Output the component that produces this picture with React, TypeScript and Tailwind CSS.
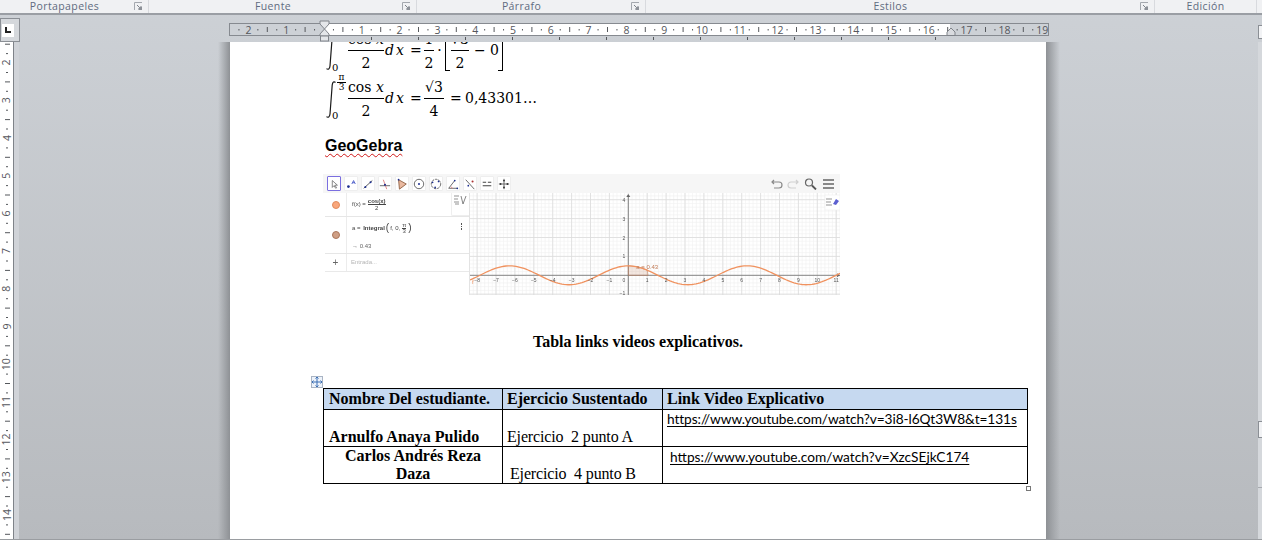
import type { ReactNode } from "react";

const ribbonGroups = [
  { label: "Portapapeles", width: "w-[149px]", launcher: true },
  { label: "Fuente", width: "w-[268px]", launcher: true },
  { label: "Párrafo", width: "w-[229px]", launcher: true },
  { label: "Estilos", width: "w-[509px]", launcher: true },
  { label: "Edición", width: "w-[102px]", launcher: false },
];

const CM = 37.8;

function Launcher() {
  return (
    <svg width="9" height="9" viewBox="0 0 9 9" className="mr-[5px] shrink-0">
      <path d="M0.5 8V0.5H8" fill="none" stroke="#a4a8ae" />
      <path d="M3 3l4 4M7 4v3H4" fill="none" stroke="#7d8289" />
      <rect x="5" y="5" width="3" height="3" fill="#8d9198" />
    </svg>
  );
}

function TopRuler() {
  const zero = 95;
  const nums = [-2, -1, 1, 2, 3, 4, 5, 6, 7, 8, 9, 10, 11, 12, 13, 14, 15, 16, 17, 18, 19];
  const marks = [];
  for (let i = -10; i <= 77; i++) marks.push(i);
  return (
    <svg width="820" height="13" viewBox="0 0 820 13" className="block">
      <rect x="0.5" y="0.5" width="819" height="12" fill="#cdd1d6" stroke="#868a90" />
      <rect x={zero} y="1" width="626" height="11" fill="#ffffff" />
      {marks.map((i) => {
        const x = zero + (i * CM) / 4;
        if (i % 4 === 0 || x < 3 || x > 816) return null;
        return i % 2 === 0 ? (
          <line key={i} x1={x} x2={x} y1="4" y2="9" stroke="#55585c" />
        ) : (
          <rect key={i} x={x - 0.5} y="6" width="1" height="1.5" fill="#55585c" />
        );
      })}
      {nums.map((n) => (
        <text key={n} x={zero + Math.abs(n) * CM * Math.sign(n)} y="10.5" textAnchor="middle" fontSize="10.5" fill="#55565c" fontFamily="Open Sans, sans-serif">
          {Math.abs(n)}
        </text>
      ))}
    </svg>
  );
}

function LeftRuler() {
  const nums = [1, 2, 3, 4, 5, 6, 7, 8, 9, 10, 11, 12, 13, 14];
  return (
    <svg width="14" height="497" viewBox="0 0 14 497" className="block shrink-0">
      <rect x="0" y="0" width="13" height="497" fill="#ffffff" />
      <rect x="13" y="0" width="1" height="497" fill="#7f8389" />
      {nums.map((n) => {
        const y = 96 + (n - 4) * 37.7;
        return (
          <g key={n}>
            <text x="7" y={y} textAnchor="middle" fontSize="10.5" fill="#55565c" fontFamily="Open Sans, sans-serif" transform={`rotate(-90 7 ${y}) translate(0 3.5)`}>
              {n}
            </text>
            <rect x="6" y={y + 9.4} width="2" height="1" fill="#55585c" />
            <rect x="5" y={y + 18.8} width="5" height="1" fill="#55585c" />
            <rect x="6" y={y + 28.2} width="2" height="1" fill="#55585c" />
          </g>
        );
      })}
    </svg>
  );
}

function Frac({ top, bottom, w = "w-[33px]" }: { top?: ReactNode; bottom: ReactNode; w?: string }) {
  return (
    <div className={`grid h-[48px] shrink-0 grid-rows-[24px_24px] whitespace-nowrap text-center ${w}`}>
      <div className="flex items-end justify-center pb-[1px] leading-[20px]">{top}</div>
      <div className="border-t border-black pt-[1px] leading-[22px]">{bottom}</div>
    </div>
  );
}

function Integral({ upper }: { upper?: ReactNode }) {
  return (
    <div className="relative h-[48px] w-[23px] shrink-0">
      <svg width="14" height="40" viewBox="0 0 14 40" className="mt-[6px]">
        <path d="M10.5 2.5C9 1 7.6 2 7.2 5L5 34c-.3 3-2 4-3.5 2.6" fill="none" stroke="#1a1a1a" strokeWidth="1.2" />
      </svg>
      <span className="absolute left-[7px] top-[36px] text-[10px] font-medium leading-[12px]">0</span>
      {upper}
    </div>
  );
}

function MathRowOne() {
  return (
    <div className="ml-[2px] -mt-[16px] flex h-[48px] items-center font-['DejaVu_Serif',serif] text-[14px] text-black">
      <Integral />
      <Frac top={<span>cos <i>x</i></span>} bottom="2" />
      <span className="ml-[4px] w-[25px] italic tracking-[2px]">dx</span>
      <span className="w-[14px]">=</span>
      <Frac top="1" bottom="2" w="w-[10px]" />
      <span className="w-[11px] text-center">·</span>
      <div className="h-[45px] w-[5px] shrink-0 self-start border-y border-l border-black" />
      <Frac top="√3" bottom="2" w="w-[18px] ml-[1px]" />
      <span className="ml-[5px] w-[16px]">−</span>
      <span className="w-[8px]">0</span>
      <div className="h-[45px] w-[5px] shrink-0 self-start border-y border-r border-black" />
    </div>
  );
}

function MathRowTwo() {
  const upper = (
    <div className="absolute left-[12px] -top-[1px] w-[9px] text-center text-[9px] font-medium leading-[9px]">
      <div className="border-b border-black">π</div>
      <div>3</div>
    </div>
  );
  return (
    <div className="ml-[2px] flex h-[48px] items-center font-['DejaVu_Serif',serif] text-[14px] text-black">
      <Integral upper={upper} />
      <Frac top={<span>cos <i>x</i></span>} bottom="2" />
      <span className="ml-[4px] w-[25px] italic tracking-[2px]">dx</span>
      <span className="w-[14px]">=</span>
      <Frac top="√3" bottom="4" w="w-[20px]" />
      <span className="ml-[6px] w-[15px]">=</span>
      <span>0,43301…</span>
    </div>
  );
}

const toolIcons: ReactNode[] = [
  <path key="0" d="M5 3v8l2-2 2 3 1-.6-2-3h3z" fill="#fff" stroke="#555" strokeWidth=".8" />,
  <g key="1"><circle cx="4" cy="10" r="1.6" fill="#1d2f8f" /><path d="M8 7l2-4 2 4M9 5.5h2" fill="none" stroke="#3f51c4" /></g>,
  <g key="2"><path d="M2 12L12 3" stroke="#444" /><circle cx="4" cy="10.5" r="1.2" fill="#1d2f8f" /><circle cx="10" cy="5" r="1.2" fill="#1d2f8f" /></g>,
  <g key="3"><path d="M1 9h12" stroke="#555" /><path d="M5 2l4 11" stroke="#d77" /><circle cx="7" cy="8" r="1.2" fill="#1d2f8f" /></g>,
  <g key="4"><path d="M3 2l9 5-8 6z" fill="#e9b9a0" stroke="#8a5a3c" /><circle cx="3" cy="2" r="1" fill="#1d2f8f" /></g>,
  <g key="5"><circle cx="7" cy="7" r="5.5" fill="none" stroke="#555" /><circle cx="7" cy="7" r="1.2" fill="#1d2f8f" /></g>,
  <g key="6"><circle cx="7" cy="7" r="5.5" fill="none" stroke="#555" strokeDasharray="3 1" /><circle cx="3" cy="5" r="1" fill="#1d2f8f" /><circle cx="10" cy="4" r="1" fill="#1d2f8f" /><circle cx="6" cy="11" r="1" fill="#1d2f8f" /></g>,
  <g key="7"><path d="M2 12L9 3M2 12h10" stroke="#555" fill="none" /><path d="M5 12a4 4 0 0 0-1-3l3 3z" fill="#e88" /><circle cx="9" cy="3" r="1" fill="#1d2f8f" /><circle cx="12" cy="12" r="1" fill="#1d2f8f" /></g>,
  <g key="8"><path d="M2 2l10 11" stroke="#555" /><circle cx="10" cy="4" r="1.2" fill="#a33" /><circle cx="5" cy="9" r="1" fill="#1d2f8f" /></g>,
  <g key="9"><path d="M2 5h4M2 9h10M8 5h4" stroke="#444" strokeWidth="1.2" /></g>,
  <g key="10"><path d="M7 1v12M1 7h12" stroke="#555" /><circle cx="7" cy="3" r="1.1" fill="#333" /><circle cx="7" cy="11" r="1.1" fill="#333" /><circle cx="3" cy="7" r="1.1" fill="#333" /><circle cx="11" cy="7" r="1.1" fill="#333" /></g>,
];

function GeoToolbar() {
  return (
    <div className="flex h-[19px] items-center justify-between bg-[#f6f6f6] pl-[4px] pr-[6px]">
      <div className="flex gap-[3px]">
        {toolIcons.map((icon, i) => (
          <div key={i} className={`flex h-[15px] w-[14px] items-center justify-center rounded-[1px] bg-white ${i === 0 ? "border border-[#7b6fe0]" : "border border-[#eeeeee]"}`}>
            <svg width="12" height="12" viewBox="0 0 14 14">{icon}</svg>
          </div>
        ))}
      </div>
      <div className="flex items-center gap-[4px]">
        <svg width="12" height="10" viewBox="0 0 12 10"><path d="M3 1L1 3l2 2M1 3h7a3 3 0 0 1 0 6H3" fill="none" stroke="#8a8a8a" strokeWidth="1.2" /></svg>
        <svg width="12" height="10" viewBox="0 0 12 10"><path d="M9 1l2 2-2 2M11 3H4a3 3 0 0 0 0 6h5" fill="none" stroke="#cfcfcf" strokeWidth="1.2" /></svg>
        <svg width="13" height="12" viewBox="0 0 13 12" className="ml-[1px]"><circle cx="5" cy="4.5" r="3.5" fill="none" stroke="#666" strokeWidth="1.2" /><path d="M8 7.5l4 4" stroke="#555" strokeWidth="1.8" /></svg>
        <svg width="11" height="10" viewBox="0 0 11 10" className="ml-[2px]"><path d="M0 1h11M0 5h11M0 9h11" stroke="#666" strokeWidth="1.3" /></svg>
      </div>
    </div>
  );
}

function AlgebraPanel() {
  return (
    <div className="w-[146px] shrink-0 border-r border-[#e3e3e3] pl-[1px] font-['Liberation_Sans',sans-serif] text-[6px] text-[#444]">
      <div className="flex h-[24px] border-b border-[#e6e6e6]">
        <div className="flex w-[22px] items-center justify-center border-r border-[#ececec]">
          <div className="size-[8px] rounded-full border border-[#e08a5c] bg-[#f9a77c]" />
        </div>
        <div className="flex flex-1 items-center gap-[2px] pl-[5px]">
          <span>f(x) =</span>
          <div className="text-center leading-[6px]">
            <div className="border-b border-[#444] font-bold">cos(x)</div>
            <div>2</div>
          </div>
        </div>
        <div className="flex w-[18px] items-start justify-center rounded-bl-[2px] border-b border-l border-[#eeeeee] pt-[2px]">
          <svg width="13" height="10" viewBox="0 0 13 10"><path d="M0 1h5M0 4h4M0 7h5M1 9h4" stroke="#666" strokeWidth=".7" /><path d="M7 1l2 8 3-8" fill="none" stroke="#666" strokeWidth=".8" /></svg>
        </div>
      </div>
      <div className="flex h-[37px] border-b border-[#e6e6e6]">
        <div className="flex w-[22px] items-center justify-center border-r border-[#ececec]">
          <div className="size-[8px] rounded-full border border-[#a9755a] bg-[#cf9f85]" />
        </div>
        <div className="flex flex-1 flex-col gap-[8px] pl-[5px] pt-[5px]">
          <div className="flex h-[12px] items-center gap-[1px] whitespace-pre">
            <span>a = </span>
            <span className="font-bold">Integral</span>
            <span className="text-[10px] font-thin leading-[10px]">(</span>
            <span>f, 0,</span>
            <div className="mx-[1px] text-center leading-[5px]">
              <div className="border-b border-[#444]">π</div>
              <div>3</div>
            </div>
            <span className="text-[10px] font-thin leading-[10px]">)</span>
          </div>
          <span className="text-[#666]">→ 0.43</span>
        </div>
        <div className="mr-[7px] mt-[6px] flex flex-col gap-[1px]">
          <div className="size-[1.5px] bg-[#555]" />
          <div className="size-[1.5px] bg-[#555]" />
          <div className="size-[1.5px] bg-[#555]" />
        </div>
      </div>
      <div className="flex h-[18px] border-b border-[#e9e9e9]">
        <div className="flex w-[22px] items-center justify-center border-r border-[#ececec] text-[10px] text-[#666]">+</div>
        <div className="flex flex-1 items-center pl-[4px] text-[#b5b5b5]">Entrada...</div>
      </div>
    </div>
  );
}

function Chart() {
  const W = 370;
  const H = 102;
  const ox = 158.3;
  const oy = 82.3;
  const u = 18.9;
  const xs: number[] = [];
  for (let i = -9; i <= 12; i++) xs.push(i);
  const ys = [-1, 1, 2, 3, 4, 5];
  const minorX: number[] = [];
  for (let v = -9; v <= 12; v += 0.2) minorX.push(ox + v * u);
  const minorY: number[] = [];
  for (let v = -1; v <= 5; v += 0.2) minorY.push(oy - v * u);

  let curve = "";
  for (let px = 0; px <= W; px += 2) {
    const y = oy - (Math.cos((px - ox) / u) / 2) * u;
    curve += `${px === 0 ? "M" : "L"}${px} ${y.toFixed(2)} `;
  }
  let area = `M${ox} ${oy} `;
  for (let v = 0; v <= Math.PI / 3; v += 0.05) {
    area += `L${(ox + v * u).toFixed(2)} ${(oy - (Math.cos(v) / 2) * u).toFixed(2)} `;
  }
  area += `L${ox + (Math.PI / 3) * u} ${oy}Z`;

  return (
    <svg width={W} height={H} viewBox={`0 0 ${W} ${H}`} className="block shrink-0" fontFamily="Liberation Sans, sans-serif">
      <rect width={W} height={H} fill="#ffffff" />
      {minorX.map((x) => <line key={x} x1={x} x2={x} y1="0" y2={H} stroke="#f0f0f0" strokeWidth=".6" />)}
      {minorY.map((y) => <line key={y} y1={y} y2={y} x1="0" x2={W} stroke="#f0f0f0" strokeWidth=".6" />)}
      {xs.map((v) => <line key={v} x1={ox + v * u} x2={ox + v * u} y1="0" y2={H} stroke="#dcdcdc" strokeWidth=".8" />)}
      {ys.map((v) => <line key={v} y1={oy - v * u} y2={oy - v * u} x1="0" x2={W} stroke="#dcdcdc" strokeWidth=".8" />)}
      <path d={`M0 ${oy}H${W}`} stroke="#777" strokeWidth=".9" />
      <path d={`M${ox} 2V${H}`} stroke="#777" strokeWidth=".9" />
      <path d={`M${ox - 2} 4L${ox} 1L${ox + 2} 4Z`} fill="#666" />
      <path d={`M${W - 3} ${oy - 2}L${W} ${oy}L${W - 3} ${oy + 2}Z`} fill="#666" />
      <path d={area} fill="#c98f6f" fillOpacity=".22" stroke="#bd7650" strokeWidth=".5" />
      <path d={curve} fill="none" stroke="#f0925f" strokeWidth="1.3" />
      {xs.filter((v) => v !== 0 && v >= -8 && v <= 11).map((v) => (
        <text key={v} x={ox + v * u} y={oy + 7} textAnchor="middle" fontSize="5" fill="#555">{v < 0 ? `−${-v}` : v}</text>
      ))}
      {[1, 2, 3, 4].map((v) => (
        <text key={v} x={ox - 3} y={oy - v * u + 2} textAnchor="end" fontSize="5" fill="#555">{v}</text>
      ))}
      <text x={ox - 3} y={oy + 7} textAnchor="end" fontSize="5" fill="#555">0</text>
      <text x={ox - 3} y={oy + u + 1} textAnchor="end" fontSize="5" fill="#555">−1</text>
      <text x={ox + 8} y={oy - 6} fontSize="6" fill="#c17b57">a = 0.43</text>
      <text x="2" y={oy + 9} fontSize="6" fill="#f0925f">f</text>
      <rect x={W - 15} y="2" width="15" height="15" fill="#ffffff" stroke="#eeeeee" strokeWidth=".6" />
      <path d={`M${W - 14} 6h6M${W - 14} 9h5M${W - 14} 12h6`} stroke="#666" strokeWidth=".7" />
      <path d={`M${W - 7} 11l3-5 3 2-3 4z`} fill="#5b5fd0" />
    </svg>
  );
}

function GeoGebra() {
  return (
    <div className="mt-[16px] h-[121px] w-[517px] blur-[0.3px]">
      <GeoToolbar />
      <div className="flex pl-[1px]">
        <AlgebraPanel />
        <Chart />
      </div>
    </div>
  );
}

const ROWS = [
  { name: "Arnulfo Anaya Pulido", ex: "Ejercicio  2 punto A", url: "https://www.youtube.com/watch?v=3i8-l6Qt3W8&t=131s", h: "h-[37px]" },
  { name: "Carlos Andrés Reza Daza", ex: "Ejercicio  4 punto B", url: "https://www.youtube.com/watch?v=XzcSEjkC174", h: "h-[37px]" },
];

function LinksTable() {
  return (
    <div className="relative mt-[36px] w-[704px]">
      <div className="absolute -left-[12px] -top-[12px] flex size-[12px] items-center justify-center border border-[#a9b4c4] bg-[#eef3fa]">
        <svg width="10" height="10" viewBox="0 0 10 10"><path d="M5 0v10M0 5h10M3.5 1.5L5 0l1.5 1.5M3.5 8.5L5 10l1.5-1.5M1.5 3.5L0 5l1.5 1.5M8.5 3.5L10 5 8.5 6.5" fill="none" stroke="#3b6fb5" /></svg>
      </div>
      <table className="w-[704px] table-fixed border-collapse font-['Liberation_Serif',serif] text-[16px] leading-[18px] text-black">
        <colgroup>
          <col className="w-[179px]" />
          <col className="w-[160px]" />
          <col className="w-[365px]" />
        </colgroup>
        <thead>
          <tr className="h-[21px] bg-[#c6d9f0] font-bold">
            <th className="border border-black pl-[5px] text-left align-middle">Nombre Del estudiante.</th>
            <th className="border border-black pl-[4px] text-left align-middle">Ejercicio Sustentado</th>
            <th className="border border-black pl-[4px] text-left align-middle">Link Video Explicativo</th>
          </tr>
        </thead>
        <tbody>
          {ROWS.map((row, i) => (
            <tr key={row.name} className={row.h}>
              <td className={`border border-black align-bottom font-bold ${i === 0 ? "pl-[5px] text-left" : "px-[14px] text-center"}`}>{row.name}</td>
              <td className={`border border-black align-bottom whitespace-pre tracking-[-0.15px] ${i === 0 ? "pl-[4px]" : "pl-[7px]"}`}>{row.ex}</td>
              <td className={`border border-black align-top whitespace-nowrap font-['Lato',sans-serif] text-[13.7px] ${i === 0 ? "pl-[4px] tracking-[-0.08px]" : "pl-[7px] pt-[1px]"}`}>
                <span className="underline underline-offset-[2px]">{row.url}</span>
              </td>
            </tr>
          ))}
        </tbody>
      </table>
      <div className="absolute -right-[4px] -bottom-[7px] size-[5px] border border-[#777] bg-white" />
    </div>
  );
}

export default function App() {
  const tabStops = [371, 418, 465, 512, 560, 607, 654, 701, 747, 795, 843, 890, 937];
  return (
    <div className="flex h-[540px] w-[1262px] flex-col overflow-hidden bg-gradient-to-b from-[#cdd1d6] to-[#b7babe]">
      <div className="flex h-[15px] shrink-0 border-b-2 border-[#9a9ea4] bg-[#f0f1f3] font-['Open_Sans',sans-serif] text-[10.5px] leading-[13px] tracking-[0.4px] text-[#5f6b80]">
        {ribbonGroups.map((g) => (
          <div key={g.label} className={`flex items-center border-r border-[#d8dade] ${g.width}`}>
            <span className={`flex-1 text-center ${g.launcher ? "pr-[5px]" : ""}`}>{g.label}</span>
            {g.launcher && <Launcher />}
          </div>
        ))}
      </div>

      <div className="relative flex h-[27px] shrink-0">
        <div className="mt-[3px] flex h-[24px] w-[20px] shrink-0 items-center border border-[#8b8f95] bg-[#d5d8dc] pl-[1px]">
          <div className="flex h-[13px] w-[12px] items-center justify-center bg-white">
            <svg width="6" height="6" viewBox="0 0 6 6"><path d="M1 0v5h5" fill="none" stroke="#222" strokeWidth="2" /></svg>
          </div>
        </div>
        <div className="relative ml-[209px] mt-[8px]">
          <TopRuler />
          <svg width="12" height="22" viewBox="0 0 12 22" className="absolute left-[90px] -top-[3px]">
            <path d="M1 1h9v3L5.5 9 1 4z" fill="#e4e6e9" stroke="#80848a" />
            <path d="M5.5 9L10 14v2H1v-2z" fill="#e4e6e9" stroke="#80848a" />
            <rect x="1.5" y="16" width="8" height="5" fill="#e4e6e9" stroke="#80848a" />
          </svg>
          <svg width="10" height="9" viewBox="0 0 10 9" className="absolute left-[717px] top-[4px]">
            <path d="M1 8.5V5l4-4 4 4v3.5z" fill="#d9dbdf" stroke="#80848a" />
          </svg>
          <div className="mt-[1px] flex h-[5px]">
            {tabStops.map((x, i) => (
              <div key={x} className={`h-[3px] w-px bg-[#55585c] ${i === 0 ? "ml-[142px]" : "ml-[46px]"}`} />
            ))}
          </div>
        </div>
        <div className="ml-auto mt-[10px] h-[14px] w-[4px] border-y border-l border-[#8b8f95] bg-[#f2f3f5]" />
      </div>

      <div className="flex min-h-0 flex-1">
        <LeftRuler />
        <div className="w-[5px] shrink-0 bg-[#d0d3d8]" />
        <div className="flex w-[211px] shrink-0 justify-end">
          <div className="w-[12px] bg-gradient-to-r from-transparent to-[#8e9195]" />
        </div>
        <div className="h-full w-[816px] shrink-0 overflow-hidden bg-white pl-[93px]">
          <MathRowOne />
          <MathRowTwo />
          <div className="mt-[12px] h-[24px] pl-[2px] font-['Liberation_Sans',sans-serif] text-[16px] font-bold leading-[24px] text-black">
            <span className="underline decoration-[#d01818] decoration-wavy decoration-1 underline-offset-2">GeoGebra</span>
          </div>
          <GeoGebra />
          <p className="mt-[37px] -ml-[93px] h-[20px] text-center font-['Liberation_Serif',serif] text-[16px] font-bold leading-[20px] text-black">
            Tabla links videos explicativos.
          </p>
          <LinksTable />
        </div>
        <div className="flex-1">
          <div className="h-full w-[14px] bg-gradient-to-r from-[#8e9195] to-transparent" />
        </div>
        <div className="flex w-[4px] shrink-0 flex-col bg-[#d5d8dc]">
          <div className="mt-[379px] h-[17px] border-y border-l border-[#8b8f95] bg-[#f2f3f5]" />
          <div className="mt-[49px] h-px bg-[#a8abb0]" />
        </div>
      </div>
      <div className="h-px shrink-0 bg-[#9a9da1]" />
    </div>
  );
}
